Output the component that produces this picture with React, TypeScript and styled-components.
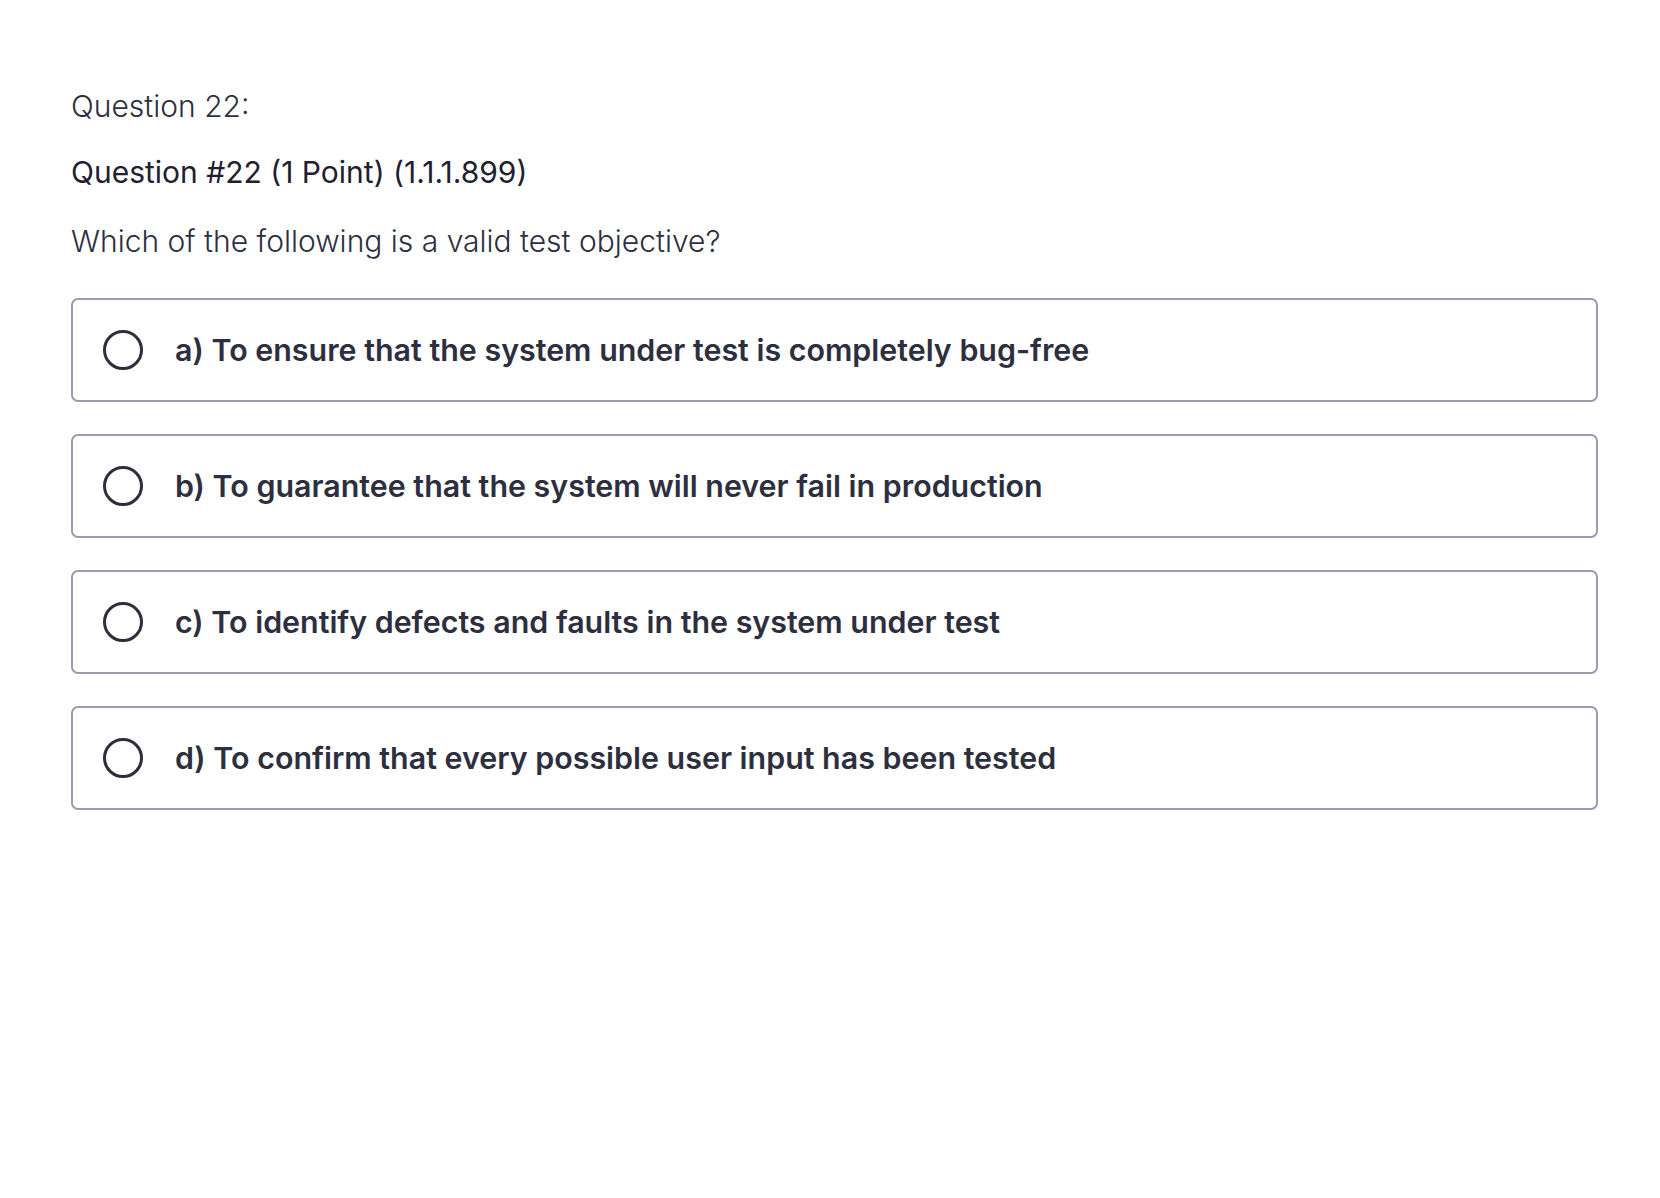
import styled, { createGlobalStyle } from 'styled-components';

const GlobalStyle = createGlobalStyle`
    html, body {
        margin: 0;
        padding: 0;
        background: #ffffff;
    }
    body {
        font-family: Inter, 'Noto Sans', sans-serif;
        color: #2d2f3f;
    }
`;

const Page = styled.div`
    display: flex;
    flex-direction: column;
    padding: 84px 62px 0 71px;
`;

const Heading = styled.div`
    font-size: 30px;
    font-weight: 300;
    line-height: 44px;
    color: #2d2f3f;
`;

const Meta = styled.div`
    margin-top: 22px;
    font-size: 30px;
    font-weight: 400;
    line-height: 44px;
    color: #1f2030;
`;

const Prompt = styled.div`
    margin-top: 25px;
    font-size: 30px;
    font-weight: 300;
    line-height: 44px;
    color: #2d2f3f;
`;

const Options = styled.div`
    display: flex;
    flex-direction: column;
    gap: 32px;
    margin-top: 35px;
`;

const Option = styled.label`
    display: flex;
    align-items: center;
    gap: 32px;
    height: 104px;
    box-sizing: border-box;
    padding: 0 30px;
    border: 2px solid #9a9cb0;
    border-radius: 7px;
    cursor: pointer;
`;

const Radio = styled.span`
    flex: none;
    width: 40px;
    height: 40px;
    box-sizing: border-box;
    border: 3.5px solid #2d2f3f;
    border-radius: 50%;
`;

const OptionText = styled.span`
    font-size: 30.4px;
    font-weight: 600;
    color: #2d2f3f;
`;

const answers = [
    'a) To ensure that the system under test is completely bug-free',
    'b) To guarantee that the system will never fail in production',
    'c) To identify defects and faults in the system under test',
    'd) To confirm that every possible user input has been tested',
];

const App = () => {
    return (
        <>
            <GlobalStyle />
            <Page>
                <Heading>Question 22:</Heading>
                <Meta>Question #22 (1 Point) (1.1.1.899)</Meta>
                <Prompt>Which of the following is a valid test objective?</Prompt>
                <Options>
                    {answers.map((a) => (
                        <Option key={a}>
                            <Radio />
                            <OptionText>{a}</OptionText>
                        </Option>
                    ))}
                </Options>
            </Page>
        </>
    );
};

export default App;
